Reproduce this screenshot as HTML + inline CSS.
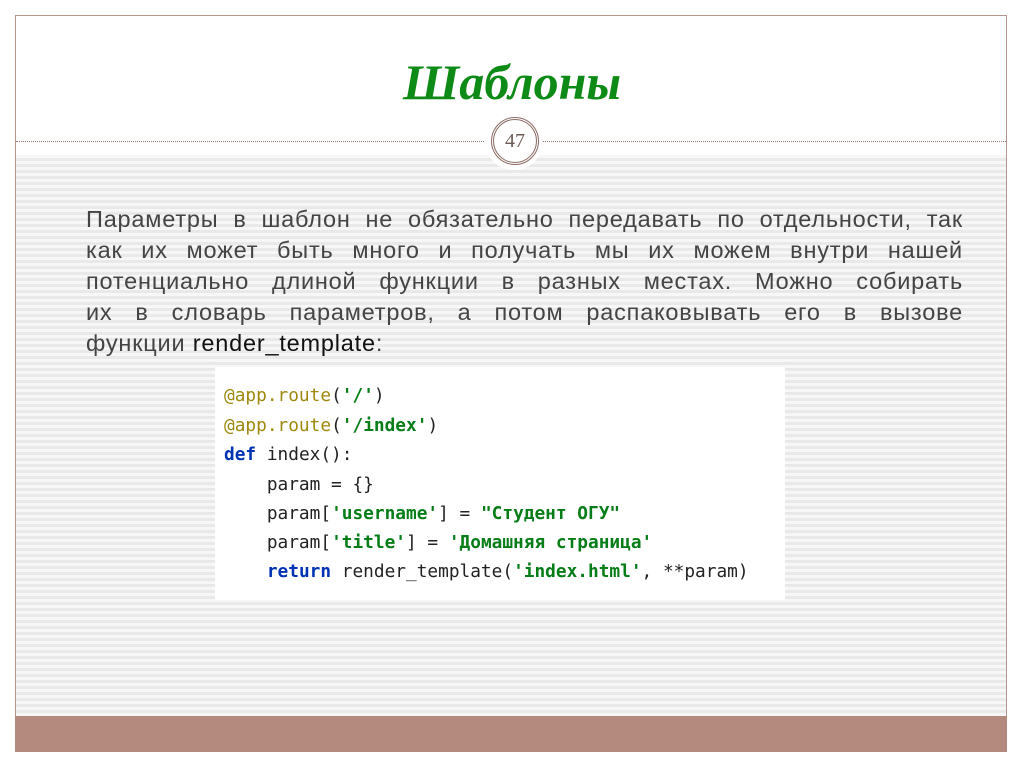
<!DOCTYPE html>
<html><head><meta charset="utf-8"><style>
body{margin:0;width:1024px;height:767px;background:#fff;position:relative;overflow:hidden;font-family:"Liberation Sans",sans-serif}
.frame{position:absolute;left:15px;top:15px;width:992px;height:736px;border:1px solid #b8958c;box-sizing:border-box;background:#fff}
.stripes{position:absolute;left:16px;top:155px;width:990px;height:561px;background:repeating-linear-gradient(to bottom,#f7f7f7 0,#f7f7f7 3px,#e9e9e9 3px,#e9e9e9 6px)}
.band{position:absolute;left:15px;top:716px;width:992px;height:36px;background:#b48a7f}
.dots{position:absolute;left:16px;top:141px;width:990px;border-top:1px dotted #9a7b73}
.title{position:absolute;left:0;width:1024px;top:53px;text-align:center;font-family:"Liberation Serif",serif;font-style:italic;font-weight:bold;font-size:50px;color:#0e8a16}
.circ{position:absolute;left:485px;top:112px;width:58px;height:58px;border-radius:50%;background:#fff}
.ring{position:absolute;left:491px;top:117px;width:42px;height:42px;border-radius:50%;border:3px double #8a6b63;box-sizing:content-box;text-align:center;line-height:42px;font-family:"Liberation Serif",serif;font-size:20px;color:#6d5a55}
.txt{position:absolute;left:86px;top:204px;width:877px;font-size:23.5px;line-height:31px;color:#444;letter-spacing:0.8px}
.txt div{text-align:justify;text-align-last:justify;white-space:nowrap}
.txt div.l{text-align-last:left}
.txt b{font-weight:normal;color:#111}
.code{position:absolute;left:215px;top:367px;width:570px;height:233px;background:#fff;font-family:"DejaVu Sans Mono","Liberation Mono",monospace;font-size:17.8px;color:#222}
.code div{position:absolute;left:9px;white-space:pre}
.d{color:#9e880d}.s{color:#067d17;font-weight:bold}.k{color:#0033b3;font-weight:bold}
</style></head><body>
<div class="frame"></div>
<div class="stripes"></div>
<div class="band"></div>
<div class="dots"></div>
<div class="title">Шаблоны</div>
<div class="circ"></div>
<div class="ring">47</div>
<div class="txt">
<div>Параметры в шаблон не обязательно передавать по отдельности, так</div>
<div>как их может быть много и получать мы их можем внутри нашей</div>
<div>потенциально длиной функции в разных местах. Можно собирать</div>
<div>их в словарь параметров, а потом распаковывать его в вызове</div>
<div class="l">функции <b>render_template</b>:</div>
</div>
<div class="code">
<div style="top:18px"><span class="d">@app.route</span>(<span class="s">'/'</span>)</div>
<div style="top:48px"><span class="d">@app.route</span>(<span class="s">'/index'</span>)</div>
<div style="top:77px"><span class="k">def</span> index():</div>
<div style="top:107px">    param = {}</div>
<div style="top:136px">    param[<span class="s">'username'</span>] = <span class="s">"Студент ОГУ"</span></div>
<div style="top:165px">    param[<span class="s">'title'</span>] = <span class="s">'Домашняя страница'</span></div>
<div style="top:194px">    <span class="k">return</span> render_template(<span class="s">'index.html'</span>, **param)</div>
</div>
</body></html>
